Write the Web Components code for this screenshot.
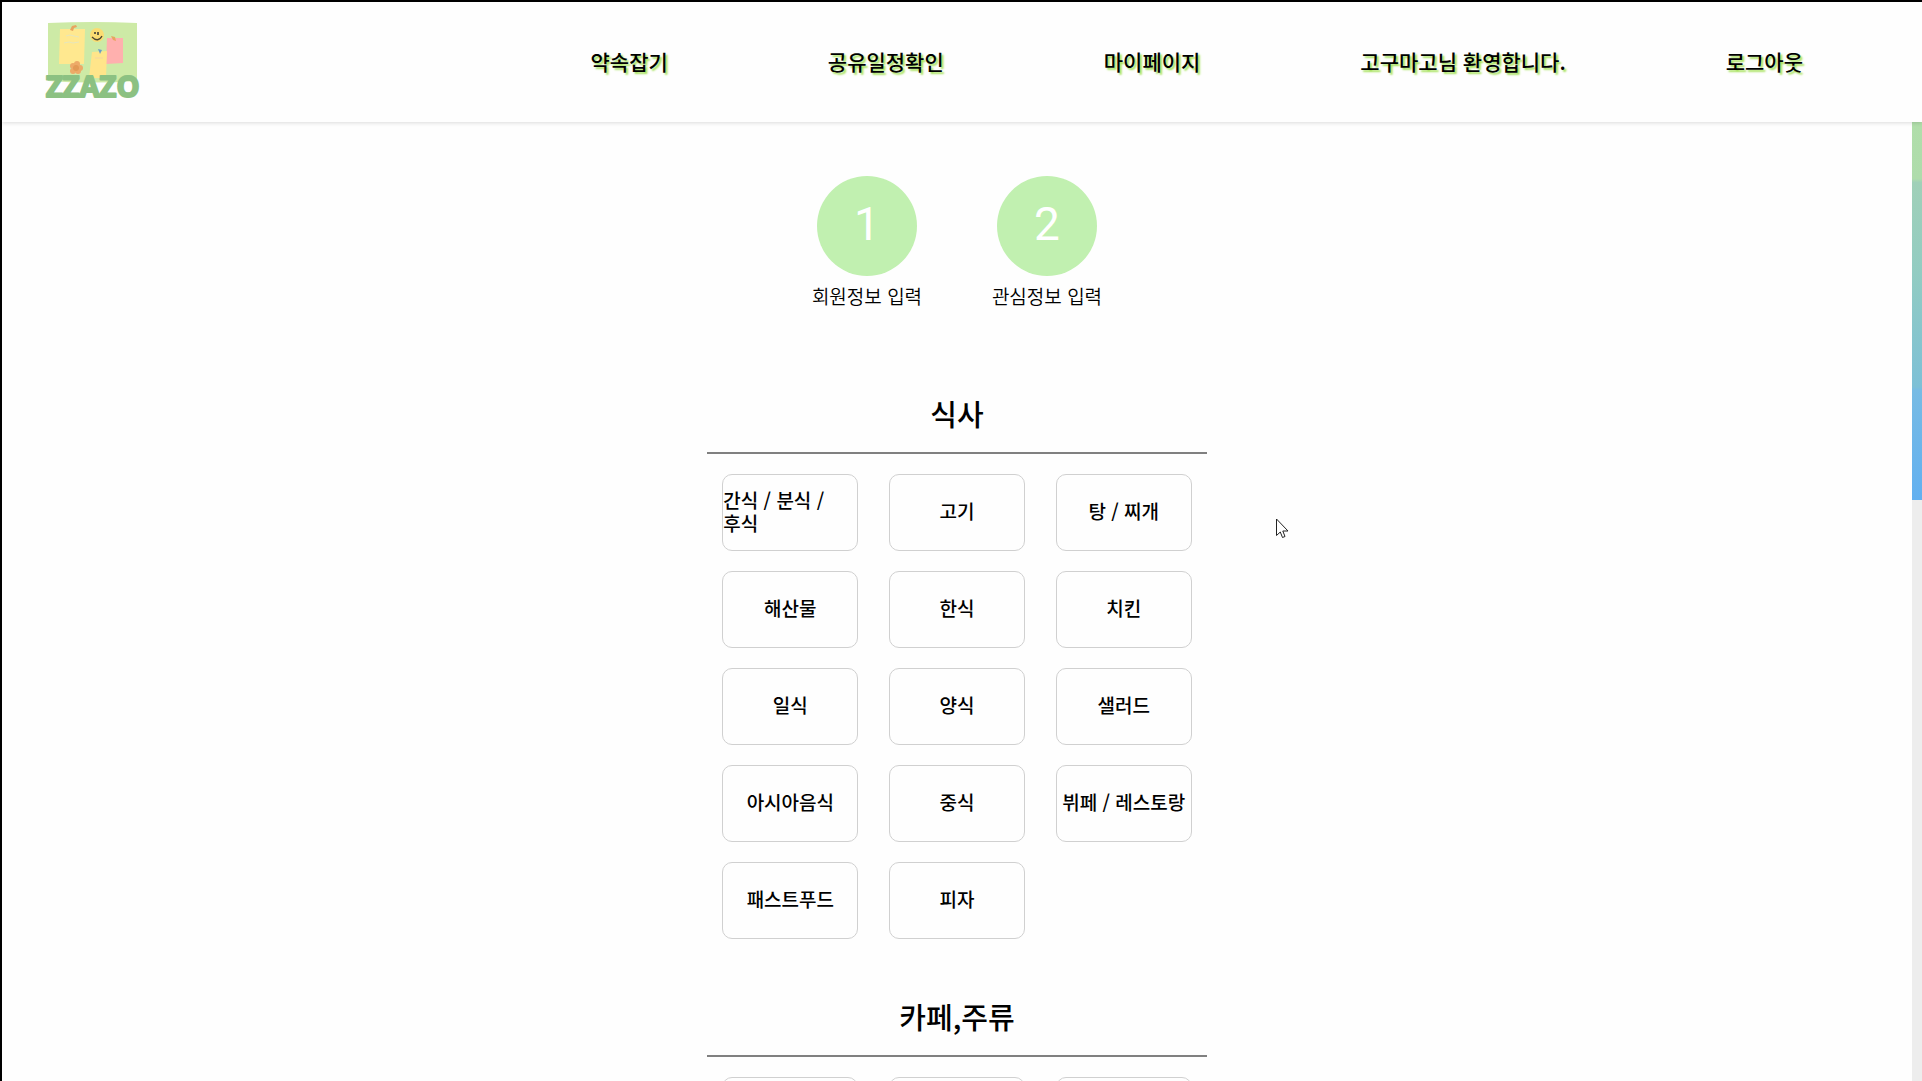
<!DOCTYPE html>
<html lang="ko">
<head>
<meta charset="utf-8">
<title>ZZAZO</title>
<style>
  html, body { margin: 0; height: 100%; }
  body { font-family: "Noto Sans CJK KR", "Noto Sans", sans-serif; color: #000; background: #fefefe; overflow: hidden; }
</style>
</head>
<body>
<zz-app>
  <zz-header slot="header">
    <zz-nav-item href="#plan">약속잡기</zz-nav-item>
    <zz-nav-item href="#shared">공유일정확인</zz-nav-item>
    <zz-nav-item href="#mypage">마이페이지</zz-nav-item>
    <zz-nav-item href="#me">고구마고님 환영합니다.</zz-nav-item>
    <zz-nav-item href="#logout">로그아웃</zz-nav-item>
  </zz-header>
  <zz-steps>
    <zz-step number="1">회원정보 입력</zz-step>
    <zz-step number="2">관심정보 입력</zz-step>
  </zz-steps>
  <zz-section heading="식사">
    <zz-choice>간식 / 분식 / 후식</zz-choice>
    <zz-choice>고기</zz-choice>
    <zz-choice>탕 / 찌개</zz-choice>
    <zz-choice>해산물</zz-choice>
    <zz-choice>한식</zz-choice>
    <zz-choice>치킨</zz-choice>
    <zz-choice>일식</zz-choice>
    <zz-choice>양식</zz-choice>
    <zz-choice>샐러드</zz-choice>
    <zz-choice>아시아음식</zz-choice>
    <zz-choice>중식</zz-choice>
    <zz-choice>뷔페 / 레스토랑</zz-choice>
    <zz-choice>패스트푸드</zz-choice>
    <zz-choice>피자</zz-choice>
  </zz-section>
  <zz-section heading="카페,주류">
    <zz-choice></zz-choice>
    <zz-choice></zz-choice>
    <zz-choice></zz-choice>
  </zz-section>
</zz-app>
<zz-cursor></zz-cursor>

<script>
const define = (name, html, setup) => {
  const template = document.createElement('template');
  template.innerHTML = html;
  customElements.define(name, class extends HTMLElement {
    constructor() {
      super();
      this.attachShadow({ mode: 'open' }).append(template.content.cloneNode(true));
    }
    connectedCallback() { if (setup) setup(this, this.shadowRoot); }
  });
};

define('zz-logo', `
  <style>
    :host { display: block; }
    a, svg { display: block; }
    text { font-family: "Open Sans", sans-serif; font-weight: 700; font-size: 29px; fill: #8cc182; stroke: #8cc182; stroke-width: 2px; stroke-linejoin: round; }
  </style>
  <a href="#home" aria-label="ZZAZO">
    <svg width="104" height="92" viewBox="0 -6 104 92">
      <path d="M4 1 Q49 -1 93 1 V59 Q49 62 4 59Z" fill="#cdeaa6"/>
      <path d="M16 7 H41 L40 42 H15Z" fill="#ffe88f"/>
      <path d="M22 14 l4 -1 4 1 5 1 M20 21 l5 -1 4 1 6 -1" fill="none" stroke="#e6e6bd"/>
      <path d="M28 4 l4 -1 1 2 -3 1 -1 3 -3 -1Z" fill="#e8a45f"/>
      <circle cx="53" cy="13" r="7" fill="#fbdc72"/>
      <path d="M51 10v2M54 10v3" stroke="#333" stroke-width="1.5"/>
      <path d="M48 15 Q54 21 58 14" fill="none" stroke="#4b4630" stroke-width="1.3"/>
      <path d="M63 16 H79 V41 L62 42Z" fill="#ffb0ae"/>
      <path d="M67 14 l4 1 1 4 -3 -1Z" fill="#e8a45f"/>
      <path d="M48 30 L63 29 62 56 H45Z" fill="#ffe58a"/>
      <path d="M51 36 h8" stroke="#f5d5a0"/>
      <path d="M54 27 l4 1 -2 4Z" fill="#6d9ec5"/>
      <g fill="#edaa68"><circle cx="33" cy="42" r="3"/><circle cx="36" cy="46" r="3"/><circle cx="34" cy="49" r="3"/><circle cx="29" cy="49" r="3"/><circle cx="29" cy="44" r="3"/></g>
      <circle cx="32" cy="46" r="3" fill="#e29a55"/>
      <text x="2" y="75">ZZAZO</text>
    </svg>
  </a>`);

define('zz-header', `
  <style>
    :host { display: flex; align-items: center; justify-content: space-between; height: 120px; padding: 0 39px 0 42px; background: #fefefe; box-shadow: 0 1px 4px rgba(0,0,0,.14); position: relative; z-index: 1; }
    nav { display: flex; padding-bottom: 3px; }
  </style>
  <zz-logo></zz-logo>
  <nav><slot></slot></nav>`);

define('zz-nav-item', `
  <style>
    :host { display: block; padding: 0 80px; }
    a { display: block; color: #000; text-decoration: none; white-space: nowrap; font-size: 21px; font-weight: 500; line-height: 32px; text-shadow: 2px 2px 2px #a0e050; }
  </style>
  <a><slot></slot></a>`, (el, root) => { root.querySelector('a').href = el.getAttribute('href'); });

define('zz-steps', `
  <style>:host { display: flex; justify-content: center; gap: 60px; padding: 54px 0 24px; }</style>
  <slot></slot>`);

define('zz-step', `
  <style>
    :host { display: flex; flex-direction: column; align-items: center; width: 120px; gap: 4px; font-size: 19px; font-weight: 350; line-height: 32px; white-space: nowrap; }
    .disc { display: flex; align-items: center; justify-content: center; box-sizing: border-box; width: 100px; height: 100px; padding-bottom: 4px; border-radius: 50%; background: #c1f0b0; color: #fff; font-family: Roboto, sans-serif; font-weight: 400; font-size: 46px; }
  </style>
  <div class="disc"></div>
  <div><slot></slot></div>`, (el, root) => { root.querySelector('.disc').textContent = el.getAttribute('number'); });

define('zz-section', `
  <style>
    :host { display: block; width: 500px; max-width: 100%; margin: 55px auto 0; }
    h2 { margin: 0; padding-bottom: 17px; border-bottom: 2px solid #808080; font-size: 29px; font-weight: 500; line-height: 44px; text-align: center; }
    .grid { display: grid; grid-template-columns: repeat(3, 1fr); row-gap: 20px; padding-top: 20px; }
  </style>
  <h2></h2>
  <div class="grid"><slot></slot></div>`, (el, root) => { root.querySelector('h2').textContent = el.getAttribute('heading'); });

define('zz-choice', `
  <style>
    :host { display: flex; justify-content: center; }
    button { display: flex; align-items: center; justify-content: center; box-sizing: border-box; width: 136px; height: 77px; padding: 0 0 4px; border: 1px solid #d0d0d0; border-radius: 10px; background: #fefefe; color: #000; font: inherit; font-size: 19px; font-weight: 500; line-height: 23px; text-align: left; word-break: keep-all; }
  </style>
  <button type="button"><slot></slot></button>`);

define('zz-app', `
  <style>
    :host { display: flex; flex-direction: column; box-sizing: border-box; height: 100vh; border: solid #000; border-width: 2px 0 0 2px; }
    .body { flex: 1; min-height: 0; display: flex; }
    main { flex: 1; min-width: 0; overflow-y: auto; scrollbar-width: none; }
    .rail { width: 10px; background: #ededed; }
    .thumb { height: 39.4%; background: linear-gradient(#b0deaa 0, #aedcab 15%, #a0d0b8 16%, #92ccc2 40%, #7dc0d6 70%, #77bbe4 71%, #62b0f0 100%); }
  </style>
  <slot name="header"></slot>
  <div class="body">
    <main><slot></slot></main>
    <div class="rail"><div class="thumb"></div></div>
  </div>`);

define('zz-cursor', `
  <style>
    :host { position: absolute; left: 1276px; top: 518px; z-index: 2; pointer-events: none; }
    svg { display: block; }
  </style>
  <svg width="14" height="22" viewBox="0 0 14 22"><path d="M.5 1 V17.5 L4.300 14 L6.500 19.500 L9 18.500 L6.800 13 H12Z" fill="#fff" stroke="#222" stroke-width="1"/></svg>`);
</script>
</body>
</html>
